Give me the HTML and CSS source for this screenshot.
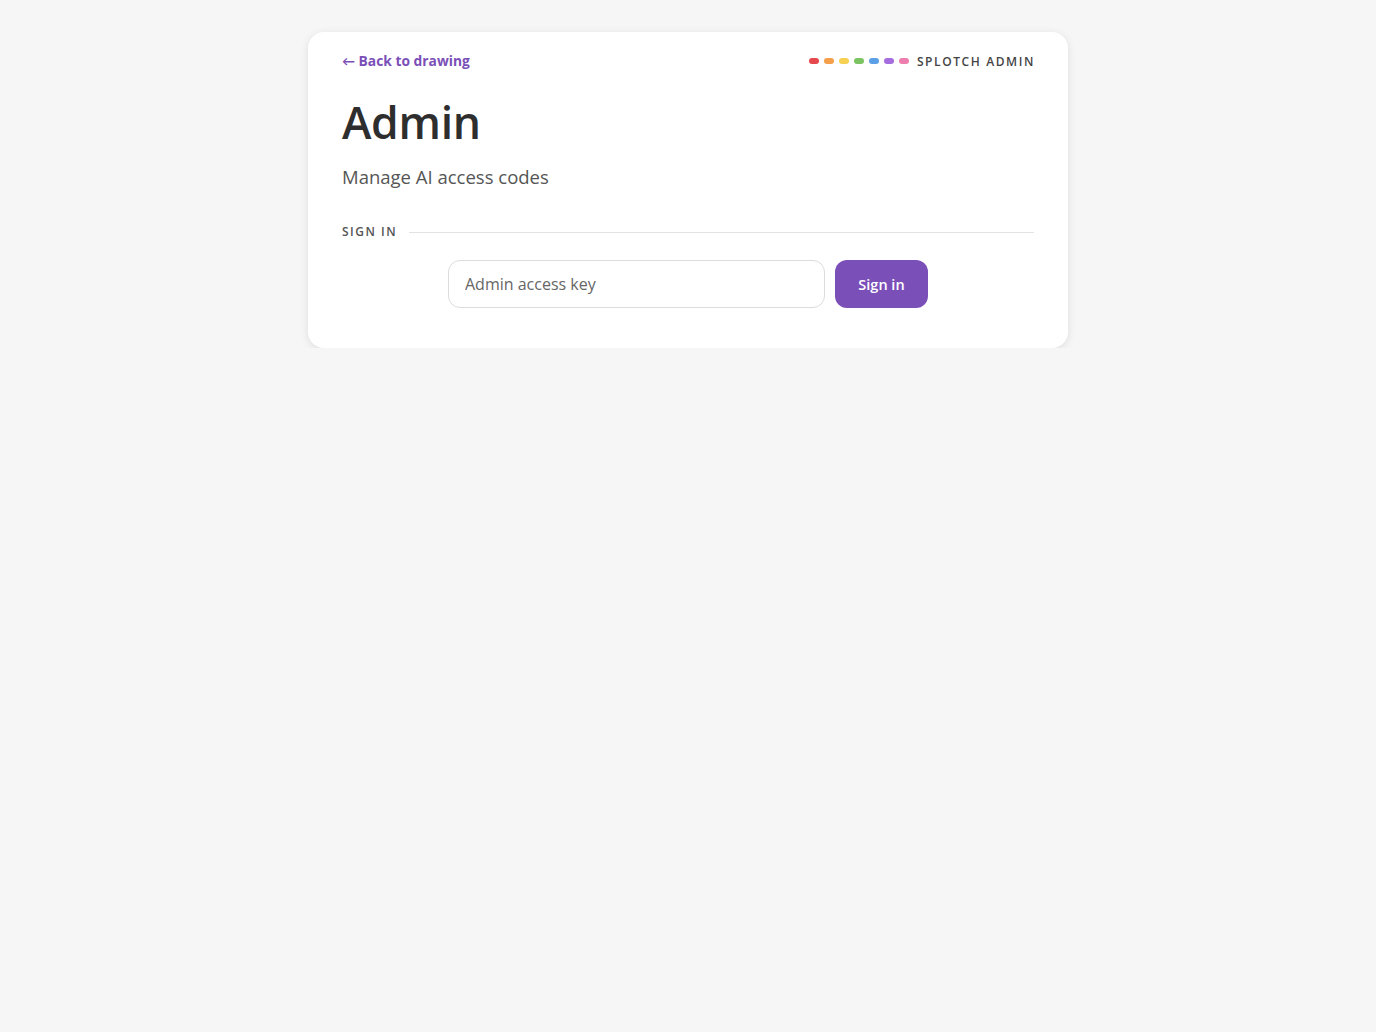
FILE: index.html
```html
<!DOCTYPE html>
<html lang="en">
<head>
<meta charset="utf-8">
<title>Admin</title>
<link rel="stylesheet" href="styles.css">
</head>
<body>
<main class="card">
  <header class="top">
    <a class="back" href="#"><span class="arrow">&#8592;</span> Back to drawing</a>
    <div class="brand">
      <span class="dots">
        <i class="dot d1"></i><i class="dot d2"></i><i class="dot d3"></i><i class="dot d4"></i><i class="dot d5"></i><i class="dot d6"></i><i class="dot d7"></i>
      </span>
      <span class="brand-name">SPLOTCH ADMIN</span>
    </div>
  </header>
  <h1 class="title">Admin</h1>
  <p class="subtitle">Manage AI access codes</p>
  <div class="section-label"><span>SIGN IN</span><span class="rule"></span></div>
  <form class="signin">
    <input class="key" type="password" placeholder="Admin access key">
    <button class="btn" type="button">Sign in</button>
  </form>
</main>
</body>
</html>
```
FILE: styles.css
```css
html, body { margin: 0; padding: 0; }
body {
  background: #f6f6f6;
  font-family: "Open Sans", Lato, sans-serif;
  color: #333;
  padding-top: 32px;
}
.card {
  width: 760px;
  box-sizing: border-box;
  margin: 0 auto;
  background: #fff;
  border-radius: 16px;
  box-shadow: 0 2px 8px rgba(0,0,0,0.10);
  padding: 19px 34px 40px 34px;
}
.top {
  display: flex;
  justify-content: space-between;
  align-items: center;
  height: 20px;
}
.back {
  color: #7b4fb8;
  font-weight: 700;
  font-size: 13.8px;
  line-height: 20px;
  text-decoration: none;
}
.arrow { font-size: 13px; }
.brand { display: flex; align-items: center; gap: 8px; }
.dots { display: flex; gap: 5px; }
.dot { display: block; width: 10px; height: 6px; border-radius: 3px; }
.d1 { background: #e5484d; }
.d2 { background: #f59f4a; }
.d3 { background: #f7d154; }
.d4 { background: #7cc462; }
.d5 { background: #5b9fe6; }
.d6 { background: #a56ddf; }
.d7 { background: #ee7eae; }
.brand-name {
  font-size: 12px;
  font-weight: 600;
  letter-spacing: 1.6px;
  color: #444;
  margin-right: -1px;
}
.title {
  margin: 26px 0 0 0;
  font-size: 44.5px;
  line-height: 50px;
  font-weight: 600;
  color: #2e2e2e;
  letter-spacing: -0.3px;
}
.subtitle {
  margin: 18px 0 0 0;
  font-size: 18.5px;
  line-height: 24px;
  color: #555;
}
.section-label {
  margin-top: 35px;
  display: flex;
  align-items: center;
  gap: 12px;
  font-size: 12px;
  line-height: 16px;
  font-weight: 600;
  letter-spacing: 1.5px;
  color: #555;
}
.rule { flex: 1; height: 1px; background: #e2e2e2; }
.signin {
  margin: 20px auto 0 auto;
  width: 480px;
  display: flex;
  gap: 10px;
}
.key {
  flex: 1;
  height: 48px;
  box-sizing: border-box;
  border: 1px solid #dcdcdc;
  border-radius: 12px;
  padding: 0 16px;
  font-family: "Open Sans", Lato, sans-serif;
  font-size: 16px;
  color: #333;
  outline: none;
}
.key::placeholder { color: #666; }
.btn {
  width: 93px;
  height: 48px;
  border: none;
  border-radius: 12px;
  background: #7b4fb8;
  color: #fff;
  font-family: "Open Sans", Lato, sans-serif;
  font-weight: 600;
  font-size: 14.5px;
}
```
